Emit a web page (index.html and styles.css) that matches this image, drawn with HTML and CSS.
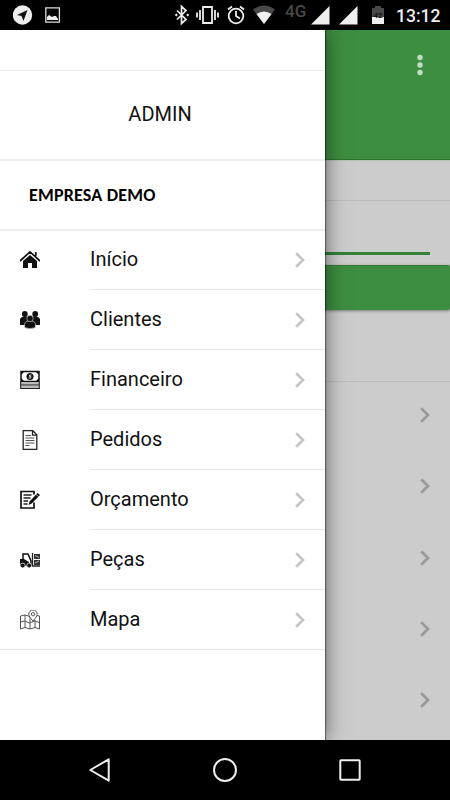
FILE: index.html
```
<!DOCTYPE html>
<html lang="pt-BR">
<head>
<meta charset="utf-8">
<meta name="viewport" content="width=device-width, initial-scale=1">
<title>Admin</title>
<link rel="stylesheet" href="styles.css">
</head>
<body>
<svg class="defs" width="0" height="0"><symbol id="chevron" viewBox="0 0 12 18"><path d="M2.200 2.300 9 9l-6.800 6.700" fill="none" stroke="currentColor" stroke-width="2.700"/></symbol></svg>
<div class="phone">
  <header class="status">
    <div class="status-left">
      <svg width="20" height="30" viewBox="0 0 20 30"><circle cx="9.500" cy="15" r="9.700" fill="#eee"/><path d="M14.500 10 4 15l4.500 1 2 5z" fill="#111"/></svg>
      <svg width="16" height="30" viewBox="0 0 16 30"><path d="M.8 7.800h13.600v14.400H.8z" fill="none" stroke="#ddd" stroke-width="1.300"/><path d="M2 20v-3l2-2 3 2 2-1 2 0 2 3v1z" fill="#eee"/></svg>
    </div>
    <div class="status-right">
      <svg width="14" height="30" viewBox="0 0 14 30"><path d="m2 10.500 9 9-4.500 4V6.500l4.500 4-9 9M2 14l-1 1 1 1M12 14l1 1-1 1" fill="none" stroke="#eee" stroke-width="1.700"/></svg>
      <svg width="24" height="30" viewBox="0 0 24 30"><path d="M7 7h9v16H7zM4 10v10M1 12.500v5M19 10v10M22 12.500v5" fill="none" stroke="#eee" stroke-width="1.800"/></svg>
      <svg width="18" height="30" viewBox="0 0 18 30"><g fill="none" stroke="#eee" stroke-width="1.800"><circle cx="9" cy="16" r="7.300"/><path d="M9 11v5l4 2.500M1 9.500l4-3M17 9.500l-4-3"/></g></svg>
      <svg width="22" height="30" viewBox="0 0 22 30"><path d="M11 24 0 9.500Q11 1.500 22 9.500z" fill="#484848"/><path d="M11 24 3.500 14Q11 9 18.500 14z" fill="#f2f2f2"/></svg>
      <span class="network">4G</span>
      <svg width="19" height="30" viewBox="0 0 19 30"><path d="M18.500 6v18.500H0z" fill="#eee"/></svg>
      <svg width="19" height="30" viewBox="0 0 19 30"><path d="M18.500 6v18.500H0z" fill="#eee"/></svg>
      <span class="battery">42</span>
      <span class="clock">13:12</span>
    </div>
  </header>

  <main class="screen">
    <div class="page">
      <div class="appbar">
        <svg width="6" height="22" viewBox="0 0 6 22"><g fill="#c3dcc4"><circle cx="3" cy="3.500" r="2.700"/><circle cx="3" cy="11" r="2.700"/><circle cx="3" cy="18.500" r="2.700"/></g></svg>
      </div>
      <div class="strip"></div>
      <div class="field"></div>
      <div class="button"></div>
      <div class="section"></div>
      <div class="rows">
        <div class="row"><svg class="chevron"><use href="#chevron"/></svg></div>
        <div class="row"><svg class="chevron"><use href="#chevron"/></svg></div>
        <div class="row"><svg class="chevron"><use href="#chevron"/></svg></div>
        <div class="row"><svg class="chevron"><use href="#chevron"/></svg></div>
        <div class="row"><svg class="chevron"><use href="#chevron"/></svg></div>
      </div>
    </div>

    <aside class="drawer">
      <div class="drawer-top"></div>
      <div class="user">ADMIN</div>
      <div class="company">EMPRESA DEMO</div>
      <nav class="menu">
        <div class="item">
          <svg class="icon" viewBox="0 0 20 20"><path d="M3 11v7h5v-5h4v5h5v-7l-7-6z"/><path d="M0 11 10 1.800 20 11M15.800 6V2" fill="none" stroke="#111" stroke-width="1.700"/></svg>
          <div class="label">Início<svg class="chevron"><use href="#chevron"/></svg></div>
        </div>
        <div class="item">
          <svg class="icon" viewBox="0 0 20 20"><circle cx="4.800" cy="4" r="2.900"/><circle cx="15.200" cy="4" r="2.900"/><path d="M0 15V9q1-2.500 4-2.500h12q3 0 4 2.500v6z"/><g stroke="#fff" stroke-width=".5"><path d="M4.500 17.500V14q1-3 3.500-3h4q2.500 0 3.500 3v3.500q-5.500 2.500-11 0z"/><circle cx="10" cy="8.500" r="3.200"/></g></svg>
          <div class="label">Clientes<svg class="chevron"><use href="#chevron"/></svg></div>
        </div>
        <div class="item">
          <svg class="icon" viewBox="0 0 20 20"><path d="M1 1.500h18v10H1z" fill="#fff" stroke="#111" stroke-width="1.500"/><path d="M1 1h4L1 5zM19 1h-4l4 4zM1 12h4L1 8zM19 12h-4l4-4z"/><circle cx="10" cy="6.500" r="3.500"/><path d="M11.500 5h-2v1.500h1.300V8H8.500" fill="none" stroke="#fff" stroke-width=".8"/><path d="M.7 12v3h18.600v-3M.7 15.500v3h18.600v-3" fill="#bbb" stroke="#222" stroke-width="1.100"/></svg>
          <div class="label">Financeiro<svg class="chevron"><use href="#chevron"/></svg></div>
        </div>
        <div class="item">
          <svg class="icon" viewBox="0 0 20 20"><path d="M3.200.7h9.600l4 4v14.600H3.200zM12.500.7v4.500h4.300" fill="#fff" stroke="#222" stroke-width="1.300"/><path d="M5.500 5.500H11M5.500 8h9M5.500 10.500h9M5.500 13h9M5.500 15.500h4" fill="none" stroke="#555"/></svg>
          <div class="label">Pedidos<svg class="chevron"><use href="#chevron"/></svg></div>
        </div>
        <div class="item">
          <svg class="icon" viewBox="0 0 20 20"><path d="M14 12.500V18H1V1.500h13v3" fill="none" stroke="#111" stroke-width="1.700"/><path d="M3.500 5h8M3.500 8h7M3.500 11H8M3.500 14h4" stroke="#222" stroke-width="1.400"/><path d="m8.500 15 1-3.500L17.500 3l2.500 2-8.200 8.500z"/><path d="m16 4.500 2.600 2.200" stroke="#fff" stroke-width=".6"/></svg>
          <div class="label">Orçamento<svg class="chevron"><use href="#chevron"/></svg></div>
        </div>
        <div class="item">
          <svg class="icon" viewBox="0 0 20 20"><path d="M0 9h4l5 3v4H0z"/><path d="M3 10V4h5l3 7v4H6" fill="none" stroke="#111" stroke-width="1.500"/><path d="M12.500 3v13H20" fill="none" stroke="#222" stroke-width="1.300"/><path d="M14 4h6v5h-6zM14 10h6v5h-6z" fill="#333"/><path d="m15 5.500 4 2M15 13l4-2" stroke="#bbb"/><g stroke="#fff" stroke-width=".7"><circle cx="2.700" cy="15.500" r="2.400"/><circle cx="9.200" cy="15.500" r="2.400"/></g></svg>
          <div class="label">Peças<svg class="chevron"><use href="#chevron"/></svg></div>
        </div>
        <div class="item">
          <svg class="icon" viewBox="0 0 20 20"><path d="m.5 6 4.500-1 5 1.500 4-1.500 5.500 1v13L15 17.500 10 19l-5-1.500L.5 19zM5 5v12.500M10 6.500V19M15 10v7.500M.5 12l4-1 5 2 5-2 5 1.500" fill="#fff" stroke="#444" stroke-width=".9"/><path d="M13 11Q8.800 6.500 8.800 4.200a4.200 4.200 0 0 1 8.400 0Q17.200 6.500 13 11z" fill="#fff" stroke="#444" stroke-width=".9"/><circle cx="13" cy="4.200" r="1.700" fill="none" stroke="#444" stroke-width=".9"/></svg>
          <div class="label">Mapa<svg class="chevron"><use href="#chevron"/></svg></div>
        </div>
      </nav>
    </aside>
  </main>

  <footer class="navbar">
    <svg width="24" height="26" viewBox="0 0 24 26"><path d="M20.700 2.300v21.400L2.300 13z" fill="none" stroke="#eee" stroke-width="2" stroke-linejoin="round"/></svg>
    <svg width="26" height="26" viewBox="0 0 26 26"><circle cx="13" cy="13" r="11" fill="none" stroke="#eee" stroke-width="2"/></svg>
    <svg width="24" height="26" viewBox="0 0 24 26"><rect x="2.300" y="3.300" width="19.400" height="19.400" rx=".8" fill="none" stroke="#eee" stroke-width="2"/></svg>
  </footer>
</div>
</body>
</html>
```

FILE: styles.css
```
* { box-sizing: border-box; }
body {
  margin: 0;
  font-family: Roboto, "Liberation Sans", sans-serif;
  color: #111;
}
svg { display: block; flex: none; }
.defs { position: absolute; }
.phone {
  width: 450px;
  height: 800px;
  display: flex;
  flex-direction: column;
  overflow: hidden;
}

/* Status bar */
.status {
  flex: none;
  height: 30px;
  display: flex;
  justify-content: space-between;
  background: #000;
  padding: 0 9px 0 13px;
}
.status-left { display: flex; gap: 12px; }
.status-right { display: flex; gap: 9px; }
.status-right svg:first-child { margin-right: -2px; }
.status-right svg:nth-child(2) { margin-right: -2px; }
.status-right svg:nth-child(3) { margin-right: -1px; }
.status-right svg:nth-child(4) { margin-right: 1px; }
.network {
  width: 22px;
  margin-right: -5px;
  font-size: 17px;
  font-weight: 500;
  line-height: 23px;
  color: #484848;
}
.battery {
  width: 12px;
  height: 18px;
  margin: 6px 3px 0 5px;
  font-size: 8px;
  font-weight: 700;
  line-height: 19px;
  text-align: center;
  color: #111;
  background: linear-gradient(#484848 60%, #eee 60%);
  clip-path: polygon(0 2px, 3px 2px, 3px 0, 9px 0, 9px 2px, 12px 2px, 12px 18px, 0 18px);
}
.clock {
  width: 45px;
  height: 30px;
  font-size: 17.5px;
  font-weight: 500;
  line-height: 32px;
  color: #eee;
  white-space: nowrap;
}

/* Dimmed page behind the drawer */
.screen { position: relative; flex: 0 0 710px; overflow: hidden; }
.page { height: 710px; background: #ccc; }
.appbar {
  position: relative;
  height: 130px;
  padding: 24px 27px 0 0;
  display: flex;
  justify-content: flex-end;
  background: #3e8e41;
  border-bottom: 1px solid #2d7330;
  box-shadow: 0 1px 1px #b5c4b5;
}
.strip { height: 41px; border-bottom: 1px solid #bcbcbc; }
.field { height: 54px; margin: 0 20px 10px; border-bottom: 3px solid #348337; }
.button {
  height: 45px;
  background: #3e8e41;
  border-top: 1px solid #357b38;
  border-radius: 2px;
  box-shadow: 0 1px 3px rgba(0, 0, 0, .4);
}
.section { height: 72px; border-bottom: 1px solid #bcbcbc; }
.row {
  height: 71.25px;
  padding-right: 19px;
  display: flex;
  align-items: center;
  justify-content: flex-end;
  color: #999;
}
.row .chevron { margin-top: -5px; }
.chevron { width: 12px; height: 18px; }

/* Drawer */
.drawer {
  position: absolute;
  top: 0;
  left: 0;
  width: 325px;
  height: 710px;
  background: #fff;
  box-shadow: 0 0 20px rgba(0, 0, 0, .55), 1px 0 1px rgba(0, 0, 0, .4);
}
.drawer-top { height: 41px; border-bottom: 1px solid #ececec; }
.user {
  height: 90px;
  padding-right: 5px;
  border-bottom: 2px solid #ededed;
  font-size: 20px;
  line-height: 87px;
  text-align: center;
}
.company {
  height: 70px;
  padding-left: 29px;
  border-bottom: 2px solid #ededed;
  font-family: Carlito, Lato, sans-serif;
  font-size: 18px;
  font-weight: 700;
  letter-spacing: .2px;
  line-height: 69px;
  color: #000;
}
.menu { margin-top: -1px; border-bottom: 1px solid #e8e8e8; }
.item { height: 60px; display: flex; align-items: center; padding-left: 20px; }
.icon { width: 20px; height: 20px; fill: #111; }
.label {
  flex: 1;
  height: 100%;
  margin-left: 50px;
  padding: 0 19px 1px 0;
  display: flex;
  align-items: center;
  justify-content: space-between;
  border-bottom: 1px solid #e8e8e8;
  font-size: 20px;
}
.label .chevron { color: #c5c5c8; margin-top: 2px; }
.item:last-child { height: 59px; }
.item:last-child .label { border-bottom: 0; }

/* System navigation */
.navbar {
  flex: 0 0 60px;
  display: flex;
  align-items: center;
  justify-content: space-between;
  padding: 0 88px;
  background: #000;
}
```
